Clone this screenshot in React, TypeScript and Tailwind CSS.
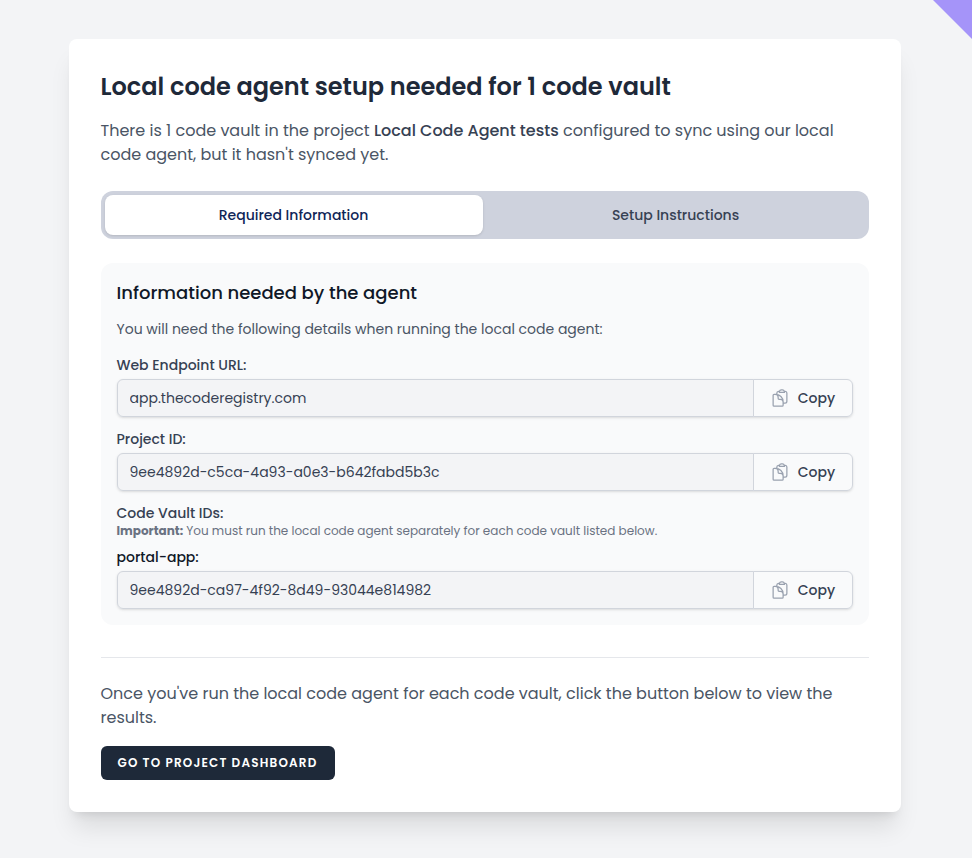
import { useState } from "react";
import { clsx } from "clsx";

const tabs = ["Required Information", "Setup Instructions"];

function CopyIcon() {
  return (
    <svg className="h-5 w-5 text-gray-400" fill="none" viewBox="0 0 24 24" stroke="currentColor" strokeWidth={1.5} aria-hidden="true">
      <path
        strokeLinecap="round"
        strokeLinejoin="round"
        d="M8.25 7.5V6.108c0-1.135.845-2.098 1.976-2.192.373-.03.748-.057 1.123-.08M15.75 18H18a2.25 2.25 0 0 0 2.25-2.25V6.108c0-1.135-.845-2.098-1.976-2.192a48.424 48.424 0 0 0-1.123-.08M15.75 18.75v-1.875a3.375 3.375 0 0 0-3.375-3.375h-1.5a1.125 1.125 0 0 1-1.125-1.125v-1.5A3.375 3.375 0 0 0 6.375 7.5H5.25m11.9-3.664A2.251 2.251 0 0 0 15 2.25h-1.5a2.251 2.251 0 0 0-2.15 1.586m5.8 0c.065.21.1.433.1.664v.75h-6V4.5c0-.231.035-.454.1-.664M6.75 7.5H4.875c-.621 0-1.125.504-1.125 1.125v12c0 .621.504 1.125 1.125 1.125h9.75c.621 0 1.125-.504 1.125-1.125V16.5a9 9 0 0 0-9-9Z"
      />
    </svg>
  );
}

type CopyFieldProps = {
  id: string;
  label: string;
  value: string;
  vault?: boolean;
};

function CopyField({ id, label, value, vault }: CopyFieldProps) {
  return (
    <div>
      <label htmlFor={id} className={clsx("block text-sm font-medium", vault ? "text-gray-900" : "text-gray-700")}>
        {label}
      </label>
      <div className="mt-1 flex rounded-md shadow-sm">
        <input
          id={id}
          type="text"
          readOnly
          value={value}
          className="h-[38px] min-w-0 flex-1 rounded-l-md border border-gray-300 bg-gray-100 px-3 text-sm text-gray-700"
        />
        <button
          type="button"
          onClick={() => navigator.clipboard?.writeText(value)}
          className="-ml-px flex w-[100px] items-center justify-center gap-2 rounded-r-md border border-gray-300 bg-gray-50 text-sm font-medium text-gray-700"
        >
          <CopyIcon />
          Copy
        </button>
      </div>
    </div>
  );
}

export default function App() {
  const [active, setActive] = useState(tabs[0]);

  return (
    <div className="relative min-h-screen bg-gray-100 pt-[39px] pr-[3px] pb-10 font-[Poppins,Inter,sans-serif]">
      {/* Corner ribbon */}
      <div className="absolute top-0 right-0 size-[39px] bg-[#a594f9] [clip-path:polygon(0_0,100%_0,100%_100%)]" />

      <main className="mx-auto w-full max-w-[832px] rounded-lg bg-white p-8 shadow-xl">
        <h1 className="text-2xl font-semibold text-gray-800">Local code agent setup needed for 1 code vault</h1>
        <p className="mt-4 text-base text-gray-600">
          There is 1 code vault in the project <span className="font-medium text-gray-700">Local Code Agent tests</span>{" "}
          configured to sync using our local code agent, but it hasn't synced yet.
        </p>

        <div role="tablist" className="mt-6 flex gap-1 rounded-xl bg-[#ced2dd] p-1">
          {tabs.map((tab) => (
            <button
              key={tab}
              role="tab"
              type="button"
              aria-selected={active === tab}
              onClick={() => setActive(tab)}
              className={clsx(
                "h-10 flex-1 rounded-lg text-sm font-medium",
                active === tab ? "bg-white text-[#0f2557] shadow" : "text-gray-700"
              )}
            >
              {tab}
            </button>
          ))}
        </div>

        <section className="mt-6 rounded-xl bg-gray-50 p-4">
          <h2 className="text-lg font-medium text-gray-900">Information needed by the agent</h2>
          <p className="mt-3 text-sm text-gray-600">
            You will need the following details when running the local code agent:
          </p>
          <div className="mt-4 space-y-3">
            <CopyField id="endpoint" label="Web Endpoint URL:" value="app.thecoderegistry.com" />
            <CopyField id="project" label="Project ID:" value="9ee4892d-c5ca-4a93-a0e3-b642fabd5b3c" />
            <div>
              <h3 className="text-sm font-medium text-gray-700">Code Vault IDs:</h3>
              <p className="mb-2 text-xs text-gray-500">
                <strong>Important:</strong> You must run the local code agent separately for each code vault listed below.
              </p>
              <CopyField id="vault" label="portal-app:" value="9ee4892d-ca97-4f92-8d49-93044e814982" vault />
            </div>
          </div>
        </section>

        <hr className="mt-8 border-gray-200" />
        <p className="mt-6 text-base text-gray-600">
          Once you've run the local code agent for each code vault, click the button below to view the results.
        </p>
        <a
          href="#dashboard"
          className="mt-4 inline-flex items-center rounded-md border border-transparent bg-gray-800 px-4 py-2 text-xs font-semibold tracking-widest text-white uppercase"
        >
          Go to project dashboard
        </a>
      </main>
    </div>
  );
}
